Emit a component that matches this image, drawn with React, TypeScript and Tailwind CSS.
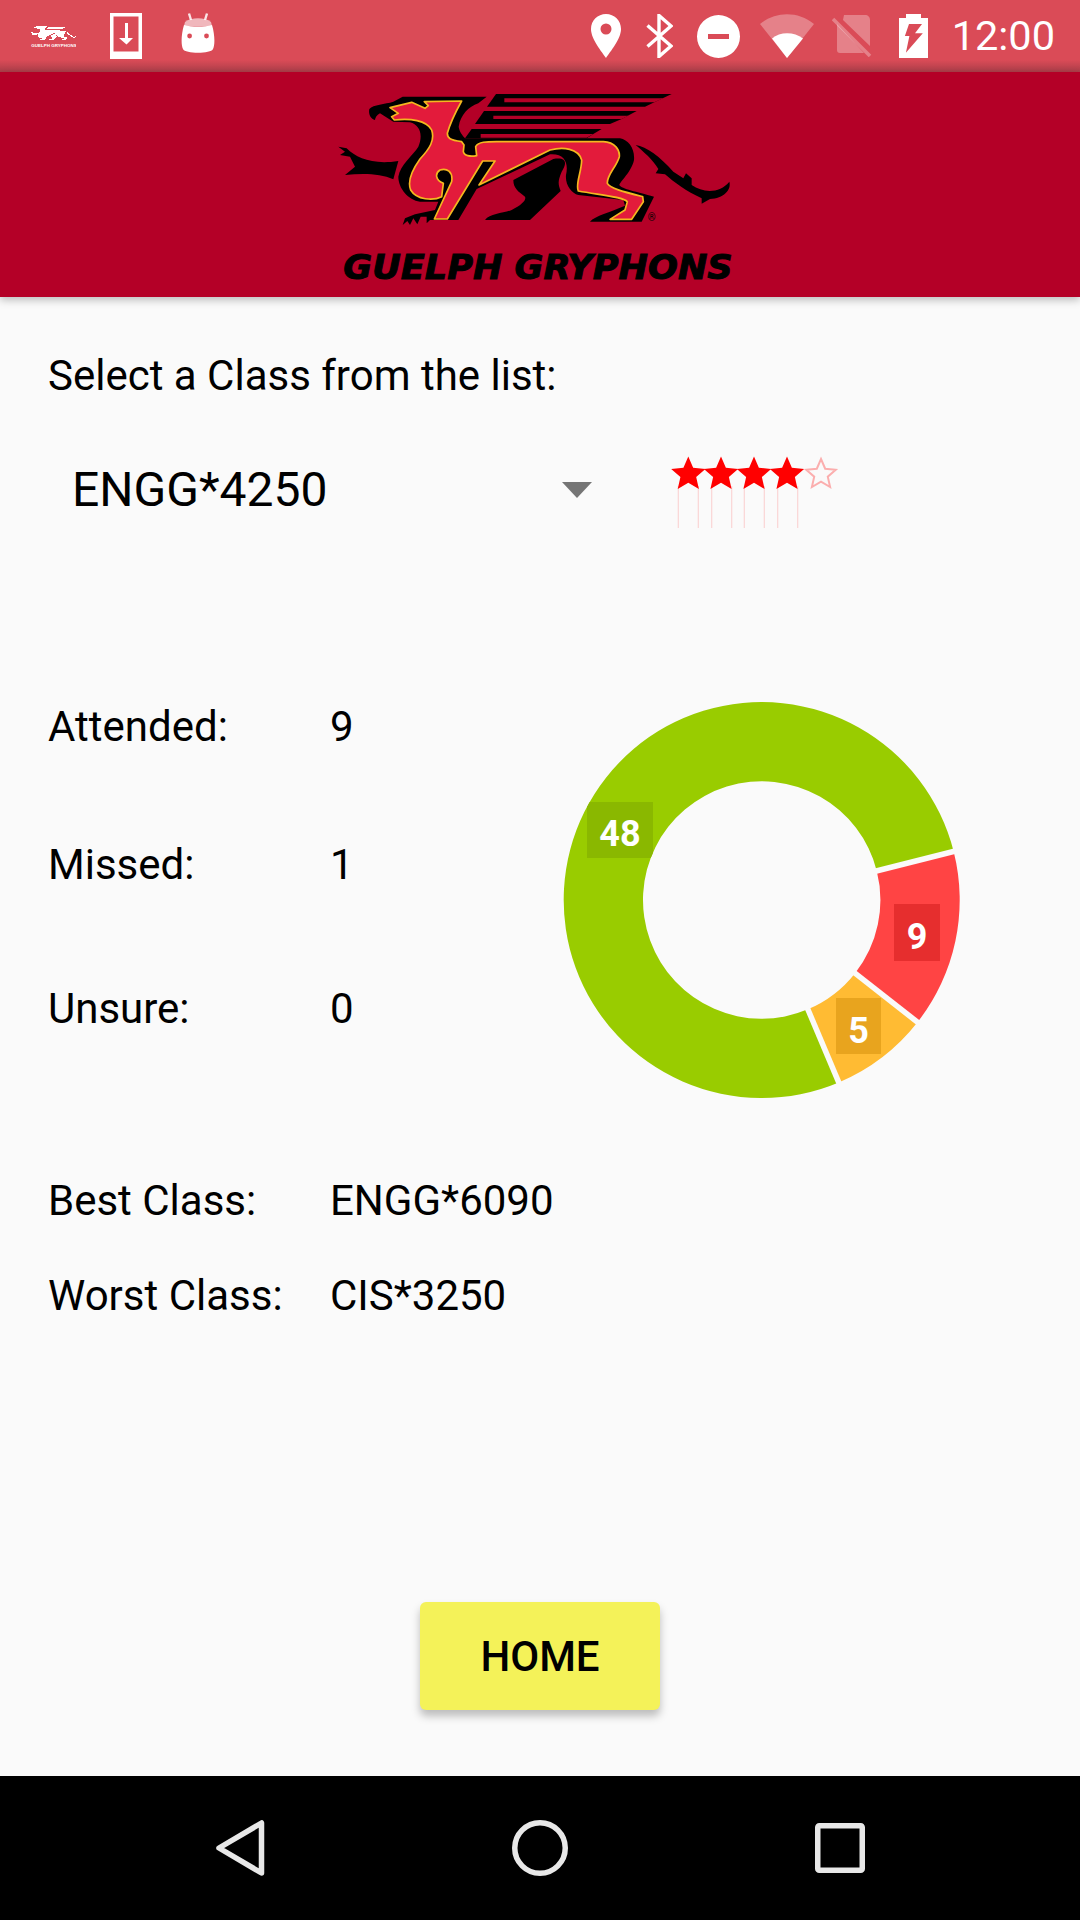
import React from "react";

const SILHOUETTE =
  "M118 72 C130 58 165 58 190 50 L218 35 L470 35 L445 55 C415 65 392 90 386 125 C388 140 398 152 405 160 L870 160 C895 165 915 190 912 225 C905 260 870 290 868 300 C875 312 920 320 972 335 L935 410 L780 410 C795 392 840 382 885 362 L880 345 L745 330 C725 325 705 300 708 270 C716 235 705 205 660 208 L440 312 L385 405 L300 405 L290 415 L290 395 L272 395 L262 418 L250 400 L240 420 L232 408 L218 420 L225 400 L255 388 L315 375 L325 350 L270 350 C235 345 205 310 205 275 C210 240 250 210 265 185 C280 150 270 120 240 112 L190 110 L150 85 C140 90 135 100 135 105 C120 100 115 85 118 72 Z";
const WINGS = [
  "M498 27 L1025 27 L973 52 L945 65 L471 65 Z",
  "M462 78 L920 78 L875 102 L840 117 L435 117 Z",
  "M425 132 L815 132 L790 147 L770 160 L405 160 Z",
];
const SLITS = [
  "M523 40 L1000 40 L973 52 L523 52 Z",
  "M490 92 L895 92 L875 102 L490 102 Z",
  "M452 147 L790 147 L770 158 L452 158 Z",
  "M470 45 L440 60 C410 75 392 105 388 128 L405 152 L430 120 Z",
];
const ARM =
  "M25 185 L50 190 C80 220 130 240 205 228 L190 283 C150 265 100 265 45 270 L75 245 L60 215 L30 210 L45 200 Z";
const TAIL =
  "M917 180 C950 185 990 215 1030 260 L1060 280 L1068 265 L1085 280 L1085 300 C1120 325 1170 325 1198 290 C1205 315 1180 340 1140 342 L1115 356 L1115 340 C1070 320 1030 290 1005 268 L977 265 L985 252 C970 225 940 200 917 180 Z";
const PATCH =
  "M550 285 L670 222 C710 215 712 235 695 260 C682 290 685 300 692 318 L600 405 L465 405 C480 385 520 385 545 375 C575 360 590 345 585 335 C565 320 550 310 550 285 Z";
const BODY =
  "M180 68 L245 52 L285 70 L295 62 L283 50 L395 48 C380 75 360 115 352 145 C352 160 360 165 395 170 L402 180 L400 200 C402 212 420 216 440 212 L437 185 C445 170 470 170 500 170 L820 170 C855 172 870 195 868 215 C860 245 830 270 832 295 C840 310 880 320 938 335 L940 350 L905 403 L840 403 L885 375 L892 350 C880 335 810 330 745 318 C735 300 755 260 755 225 C745 190 700 185 660 195 L447 300 L495 228 L458 228 L352 402 L313 402 L365 290 C370 260 350 248 330 255 C315 265 315 285 340 295 L335 335 C310 348 260 345 242 315 C230 285 250 250 270 222 C300 190 315 165 305 135 C290 105 240 100 193 105 L185 95 L205 85 Z";

function BigLogo() {
  const bg = "#b40027";
  return (
    <svg width="440" height="222" viewBox="0 0 1320 666" className="block">
      <g transform="translate(30 30)">
        <path d={SILHOUETTE} fill="#000" />
        {WINGS.map((d) => (
          <path key={d} d={d} fill="#000" />
        ))}
        {SLITS.map((d) => (
          <path key={d} d={d} fill={bg} />
        ))}
        <path d={ARM} fill="#000" />
        <path d={TAIL} fill="#000" />
        <path d={PATCH} fill="#000" />
        <path d={BODY} fill="#e31b3b" stroke="#f4b71f" strokeWidth="5" strokeLinejoin="round" />
      </g>
      <text x="995" y="438" fontSize="30" textAnchor="middle" fill="#000" className="[font-family:Roboto,sans-serif]">
        ®
      </text>
      <text
        x="70"
        y="612"
        fontSize="100"
        textLength="1168"
        lengthAdjust="spacingAndGlyphs"
        fill="#000"
        stroke="#000"
        strokeWidth="3"
        fontStyle="italic"
        fontWeight="700"
        className="[font-family:'DejaVu_Sans',sans-serif]"
      >
        GUELPH GRYPHONS
      </text>
    </svg>
  );
}

function TinyLogo() {
  return (
    <svg width="46" height="23" viewBox="40 45 1180 590" className="block" shapeRendering="crispEdges">
      <g transform="translate(30 30)" fill="#fff">
        <path d={SILHOUETTE} />
        {WINGS.slice(1).map((d) => (
          <path key={d} d={d} />
        ))}
        <path d={ARM} />
        <path d={TAIL} />
        <path d={PATCH} />
      </g>
      <text x="70" y="612" fontSize="110" textLength="1168" lengthAdjust="spacingAndGlyphs" fill="#fff" fontWeight="700" className="[font-family:'Liberation_Sans',sans-serif]">
        GUELPH GRYPHONS
      </text>
    </svg>
  );
}

function StatusLeft() {
  return (
    <div className="flex items-center">
      <div className="ml-[30px]">
        <TinyLogo />
      </div>
      <svg width="32" height="46" viewBox="0 0 32 46" className="ml-[34px] block">
        <path fill="#fff" fillRule="evenodd" d="M0 0H32V46H0Z M3.5 3.5V38.5H28.5V3.5Z" />
        <path fill="#fff" d="M15 10H18V25H23L16.5 31.5L9 25H15Z" />
      </svg>
      <svg width="34" height="40" viewBox="0 0 34 40" className="ml-[39px] mb-[6px] block">
        <path stroke="#fff" strokeWidth="2.4" strokeOpacity="0.85" d="M8 0.5L10 7M26 0.5L24 7" fill="none" />
        <path fill="#fff" fillOpacity="0.6" d="M4 9C10 4 24 4 30 9L31 13H3Z" />
        <path fill="#fff" d="M3 12C10 14 24 14 31 12C34 22 34 32 32 36C30 41 4 41 2 36C0 32 0 22 3 12Z" />
        <circle cx="8.6" cy="23" r="2.4" fill="#da4b57" />
        <circle cx="25.5" cy="23" r="2.4" fill="#da4b57" />
      </svg>
    </div>
  );
}

function StatusRight() {
  return (
    <div className="flex items-center">
      <svg width="30" height="44" viewBox="0 0 30 44" className="block">
        <path fill="#fff" fillRule="evenodd" d="M15 0C6.7 0 0 6.5 0 15C0 25 11 38 15 44C19 38 30 25 30 15C30 6.5 23.3 0 15 0Z M15 9.500A5.500 5.500 0 1 1 15 20.500A5.500 5.500 0 1 1 15 9.500Z" />
      </svg>
      <svg width="27" height="44" viewBox="0 0 27 44" className="ml-[25px] block">
        <path fill="none" stroke="#fff" strokeWidth="3.400" d="M1.500 11.500L25 32L13 42.500V1.500L25 12L1.500 32.500" />
      </svg>
      <svg width="43" height="43" viewBox="0 0 43 43" className="ml-[24px] block">
        <path fill="#fff" fillRule="evenodd" d="M21.500 0A21.500 21.500 0 1 1 21.500 43A21.500 21.500 0 1 1 21.500 0Z M11 19V24H32V19Z" />
      </svg>
      <svg width="54" height="44" viewBox="0 0 54 44" className="ml-[20px] block">
        <path fill="#fff" fillOpacity="0.3" d="M27 44L0 10C16 -3 38 -3 54 10Z" />
        <path fill="#fff" d="M27 44L12 24.500C20 17.500 34 17.500 43 24.500Z" />
      </svg>
      <svg width="40" height="42" viewBox="0 0 40 42" className="ml-[18px] block">
        <path fill="#fff" fillOpacity="0.3" d="M12 0H33C36 0 38 2 38 5V31L11 5ZM5 9L32 38H8C6 38 5 37 5 35Z" />
        <path stroke="#fff" strokeOpacity="0.3" strokeWidth="3.500" d="M1 4L38 41" />
      </svg>
      <svg width="29" height="44" viewBox="0 0 29 44" className="ml-[27px] block">
        <path fill="#fff" fillRule="evenodd" d="M7 0H22V4H29V44H0V4H7Z M10 10H23L16 19.300H23.800L6.900 38.700L10.400 22H5.900Z" />
      </svg>
      <span className="ml-[24px] mr-[25px] text-[41.500px] leading-none text-white">12:00</span>
    </div>
  );
}

function pt(r: number, a: number, cx: number, cy: number) {
  const t = (a * Math.PI) / 180;
  return [cx + r * Math.cos(t), cy + r * Math.sin(t)];
}

function sector(a0: number, a1: number) {
  const cx = 761.7,
    cy = 900,
    R = 198,
    r = 118.7;
  const large = a1 - a0 > 180 ? 1 : 0;
  const [x0, y0] = pt(R, a0, cx, cy);
  const [x1, y1] = pt(R, a1, cx, cy);
  const [x2, y2] = pt(r, a1, cx, cy);
  const [x3, y3] = pt(r, a0, cx, cy);
  return `M${x0} ${y0}A${R} ${R} 0 ${large} 1 ${x1} ${y1}L${x2} ${y2}A${r} ${r} 0 ${large} 0 ${x3} ${y3}Z`;
}

function Donut() {
  const cx = 761.7,
    cy = 900;
  const a = [-14.2, 38.1, 67.1, 345.8];
  const slices = [
    { d: sector(a[0], a[1]), c: "#ff4444", b: "#e62e2e", id: "s9", box: [894, 904, 46, 57], t: "9", tx: 917, ty: 949 },
    { d: sector(a[1], a[2]), c: "#ffbb33", b: "#e8a41e", id: "s5", box: [836, 998, 45, 56], t: "5", tx: 858.5, ty: 1042.500 },
    { d: sector(a[2], a[3]), c: "#99cc00", b: "#8ab800", id: "s48", box: [587, 802, 66, 56], t: "48", tx: 620, ty: 845.500 },
  ];
  return (
    <svg width="402" height="400" viewBox="560 700 402 400" className="block shrink-0">
      <defs>
        {slices.map((s) => (
          <clipPath key={s.id} id={s.id}>
            <path d={s.d} />
          </clipPath>
        ))}
      </defs>
      {slices.map((s) => (
        <path key={s.id} d={s.d} fill={s.c} />
      ))}
      {slices.map((s) => (
        <rect key={s.id} x={s.box[0]} y={s.box[1]} width={s.box[2]} height={s.box[3]} fill={s.b} clipPath={`url(#${s.id})`} />
      ))}
      {[a[0], a[1], a[2]].map((ang) => {
        const [x0, y0] = pt(110, ang, cx, cy);
        const [x1, y1] = pt(205, ang, cx, cy);
        return <line key={ang} x1={x0} y1={y0} x2={x1} y2={y1} stroke="#fafafa" strokeWidth="5.500" />;
      })}
      {slices.map((s) => (
        <text key={s.id} x={s.tx} y={s.ty} textAnchor="middle" fill="#fff" fontSize="36" fontWeight="700">
          {s.t}
        </text>
      ))}
    </svg>
  );
}

function starPoints(cx: number, cy: number, R: number) {
  const pts: string[] = [];
  for (let i = 0; i < 10; i++) {
    const rad = i % 2 === 0 ? R : R * 0.46;
    const t = ((-90 + i * 36) * Math.PI) / 180;
    pts.push(`${cx + rad * Math.cos(t)},${cy + rad * Math.sin(t)}`);
  }
  return pts.join(" ");
}

function Stars() {
  const xs = [688.3, 721, 754, 787];
  const lines = [678.3, 698.3, 711.7, 731.7, 744.3, 764.3, 777.7, 797.7];
  return (
    <svg width="170" height="76" viewBox="670 454 170 76" className="block">
      {lines.map((x) => (
        <line key={x} x1={x} x2={x} y1="486" y2="528" stroke="#ff0000" strokeOpacity="0.15" strokeWidth="1.200" />
      ))}
      {xs.map((x) => (
        <polygon key={x} points={starPoints(x, 474.500, 18)} fill="#ff0000" />
      ))}
      <polygon points={starPoints(821, 474.500, 15.500)} fill="#fafafa" stroke="#ff0000" strokeOpacity="0.3" strokeWidth="2" />
    </svg>
  );
}

function Row({ label, value, className }: { label: string; value: string; className: string }) {
  return (
    <div className={`flex h-[52px] items-center text-[42px] text-black ${className}`}>
      <span className="w-[282px] shrink-0">{label}</span>
      <span>{value}</span>
    </div>
  );
}

export default function App() {
  return (
    <div className="flex h-[1920px] w-[1080px] flex-col overflow-hidden bg-[#fafafa] [font-family:Roboto,sans-serif]">
      <div className="flex h-[72px] shrink-0 items-center justify-between bg-[linear-gradient(to_bottom,#da4b57_0,#da4b57_60px,#ab3e49_72px)]">
        <StatusLeft />
        <StatusRight />
      </div>
      <div className="relative z-10 flex h-[225px] shrink-0 justify-center bg-[#b40027] pt-[3px] shadow-[0_3px_8px_rgba(0,0,0,0.25)]">
        <BigLogo />
      </div>
      <main className="flex min-h-0 flex-1 flex-col pl-[48px]">
        <div className="mt-[52px] flex h-[52px] items-center text-[42px] text-black">Select a Class from the list:</div>
        <div className="mt-[63px] flex h-[52px] items-center">
          <span className="ml-[24px] w-[490px] text-[48px] text-black">ENGG*4250</span>
          <svg width="30" height="16" viewBox="0 0 30 16" className="block">
            <path d="M0 0H30L15 16Z" fill="#757575" />
          </svg>
          <div className="-mt-[10px] ml-[78px] h-[76px] shrink-0 self-start">
            <Stars />
          </div>
        </div>
        <div className="mt-[184px] flex h-[400px]">
          <div className="w-[512px] shrink-0">
            <Row label="Attended:" value="9" className="" />
            <Row label="Missed:" value="1" className="mt-[86px]" />
            <Row label="Unsure:" value="0" className="mt-[92px]" />
          </div>
          <Donut />
        </div>
        <Row label="Best Class:" value="ENGG*6090" className="mt-[74px]" />
        <Row label="Worst Class:" value="CIS*3250" className="mt-[43px]" />
        <div className="flex-1" />
        <button className="mb-[66px] ml-[372px] flex h-[108px] w-[240px] items-center justify-center rounded-[6px] bg-[#f4f259] text-[42px] font-medium text-black shadow-[0_6px_8px_rgba(0,0,0,0.25)]">
          HOME
        </button>
      </main>
      <div className="flex h-[144px] shrink-0 items-center bg-black">
        <svg width="49" height="56" viewBox="0 0 49 56" className="ml-[216px] block">
          <path d="M45.500 3V53L3 28Z" fill="none" stroke="#e8e8e8" strokeWidth="5.500" strokeLinejoin="round" />
        </svg>
        <svg width="56" height="56" viewBox="0 0 56 56" className="ml-[247px] block">
          <circle cx="28" cy="28" r="25.250" fill="none" stroke="#e8e8e8" strokeWidth="5.500" />
        </svg>
        <svg width="50" height="50" viewBox="0 0 50 50" className="ml-[247px] block">
          <rect x="2.750" y="2.750" width="44.500" height="44.500" rx="1.500" fill="none" stroke="#e8e8e8" strokeWidth="5.500" />
        </svg>
      </div>
    </div>
  );
}
